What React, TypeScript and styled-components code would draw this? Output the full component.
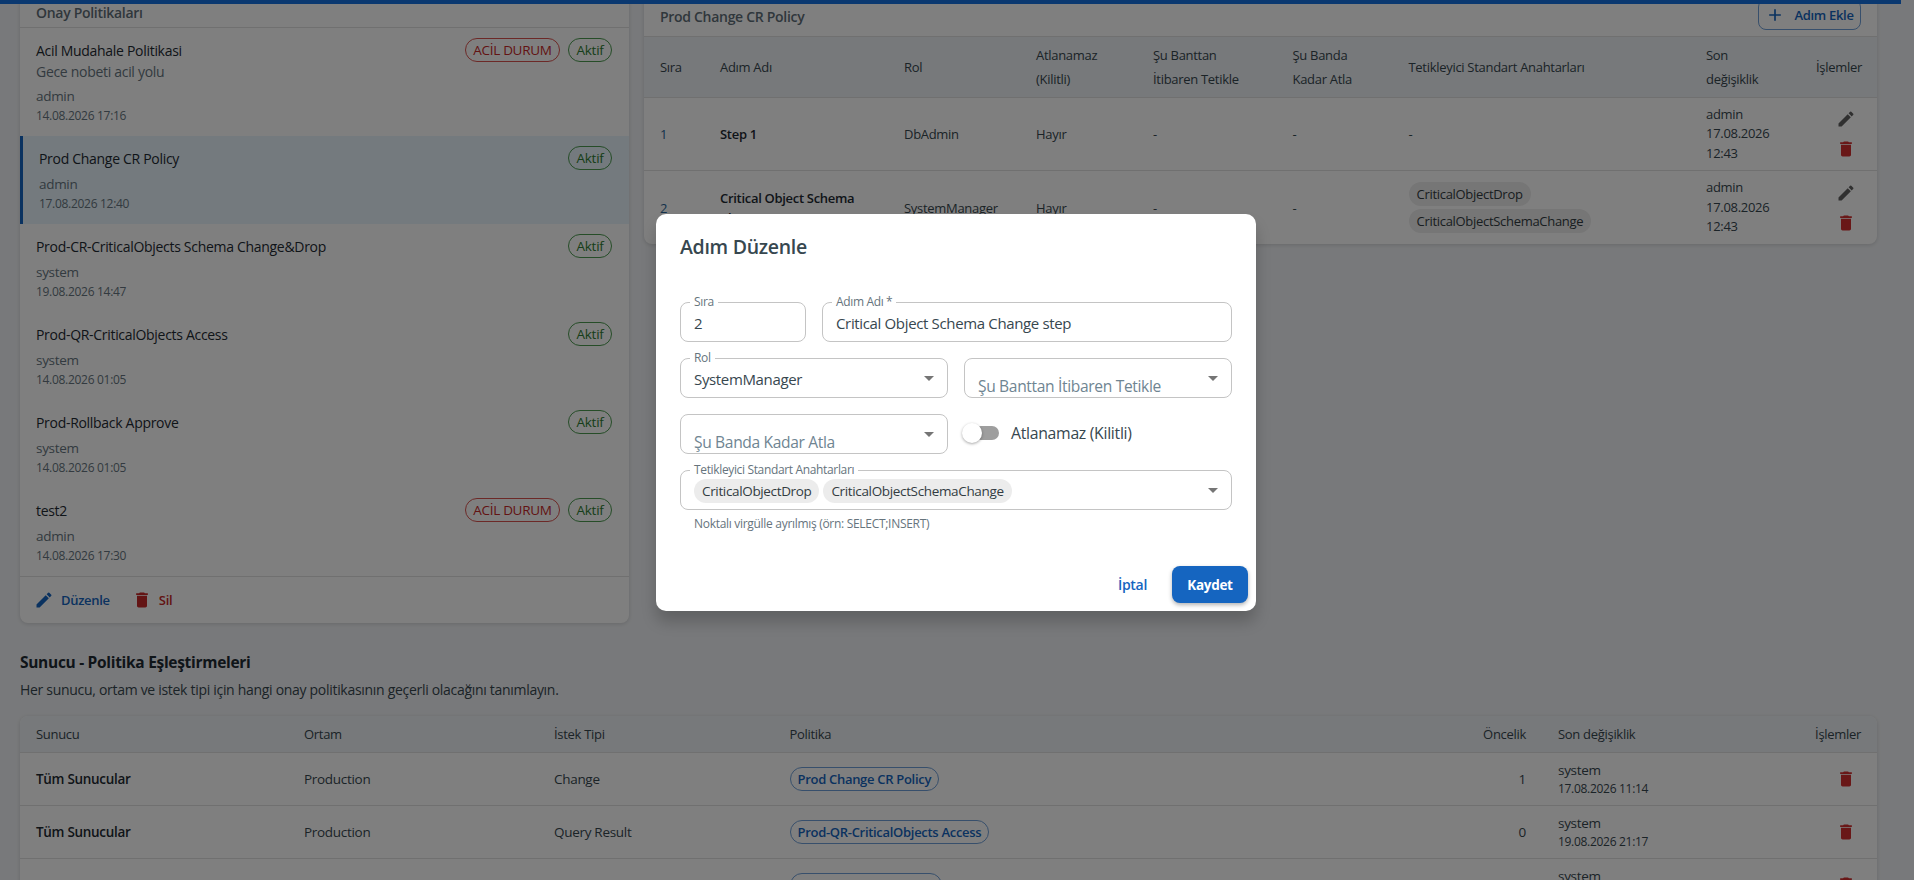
import React from "react";
import styled, { createGlobalStyle } from "styled-components";
import { MdAdd, MdArrowDropDown, MdDelete, MdEdit } from "react-icons/md";

const Global = createGlobalStyle`
  html, body { margin: 0; padding: 0; height: 100%; overflow: hidden; }
  body { font-family: "Open Sans", "Noto Sans", "Liberation Sans", sans-serif; color: #1e2a32; background: #f1f3f6; }
  * { box-sizing: border-box; }
`;

const Page = styled.div`
  position: relative;
  width: 1914px;
  height: 880px;
  overflow: hidden;
  background: #f1f3f6;
  letter-spacing: -0.3px;
`;
const TopBar = styled.div`
  position: relative;
  z-index: 2;
  height: 4px;
  width: 1901px;
  background: #1470e0;
`;
const Content = styled.div`
  margin-top: -4px;
  padding: 0 37px 0 20px;
`;
const Columns = styled.div`
  display: grid;
  grid-template-columns: 609px 1233px;
  column-gap: 15px;
  align-items: start;
`;
const Card = styled.section`
  background: #fff;
  border-radius: 0 0 8px 8px;
  box-shadow: 0 1px 4px rgba(0, 0, 0, 0.14);
  overflow: hidden;
`;
const ListHeader = styled.header`
  height: 28px;
  padding: 0 16px 3px;
  display: flex;
  align-items: center;
  font-size: 14px;
  font-weight: 600;
  color: #5f6e78;
  border-bottom: 1px solid #e0e0e0;
`;
const PolicyRow = styled.div<{ $selected?: boolean }>`
  padding: 10px 17px 11px 16px;
  background: ${(p) => (p.$selected ? "#e8f4fc" : "#fff")};
  border-left: ${(p) => (p.$selected ? "3px solid #1565c0" : "none")};
`;
const PolicyTop = styled.div`
  display: flex;
  align-items: center;
  justify-content: space-between;
  height: 24px;
`;
const PolicyName = styled.div`
  font-size: 14px;
  font-weight: 500;
  letter-spacing: -0.3px;
  color: #1e2a32;
`;
const Badges = styled.div`
  display: flex;
  gap: 8px;
`;
const Badge = styled.span<{ $tone: "red" | "green" }>`
  height: 24px;
  padding: 0 7.5px;
  display: inline-flex;
  align-items: center;
  border-radius: 12px;
  font-size: 13.5px;
  font-weight: 500;
  color: ${(p) => (p.$tone === "red" ? "#c62828" : "#2e7d32")};
  border: 1px solid ${(p) => (p.$tone === "red" ? "#d9534f" : "#4c9a50")};
`;
const PolicyNote = styled.div`
  font-size: 14px;
  line-height: 20px;
  color: #667580;
`;
const Owner = styled.div`
  margin-top: 4px;
  font-size: 13.5px;
  line-height: 20px;
  color: #667580;
`;
const Stamp = styled.div`
  margin-top: 1px;
  font-size: 12px;
  line-height: 18px;
  color: #667580;
`;
const ListFooter = styled.footer`
  height: 47px;
  padding: 0 14px;
  display: flex;
  align-items: center;
  gap: 22px;
  border-top: 1px solid #e0e0e0;
`;
const TextAction = styled.button<{ $danger?: boolean }>`
  display: inline-flex;
  align-items: center;
  gap: 7px;
  padding: 0;
  border: 0;
  background: none;
  font: inherit;
  letter-spacing: inherit;
  font-size: 13px;
  font-weight: 600;
  color: ${(p) => (p.$danger ? "#c62828" : "#1565c0")};
`;

const StepsHeader = styled.header`
  height: 37px;
  padding: 0 16px 3px 16px;
  display: flex;
  align-items: center;
  justify-content: space-between;
  border-bottom: 1px solid #e0e0e0;
`;
const StepsTitle = styled.div`
  font-size: 14px;
  font-weight: 600;
  color: #5f6e78;
`;
const AddButton = styled.button`
  height: 31px;
  width: 103px;
  margin-top: -4px;
  display: inline-flex;
  align-items: center;
  justify-content: center;
  gap: 9px;
  border: 1px solid #6f9fd8;
  border-radius: 8px;
  background: #fff;
  font: inherit;
  letter-spacing: inherit;
  font-size: 13px;
  font-weight: 600;
  color: #1565c0;
`;
const stepCols = "60px 184px 132px 117px 139.5px 116px 297.5px 110px 77px";
const StepHead = styled.div`
  display: grid;
  grid-template-columns: ${stepCols};
  height: 61px;
  align-items: center;
  background: #eef2f6;
  border-bottom: 1px solid #e0e0e0;
  font-size: 13px;
  font-weight: 500;
  line-height: 24px;
  color: #37474f;
`;
const StepRow = styled.div`
  display: grid;
  grid-template-columns: ${stepCols};
  height: 73px;
  align-items: center;
  border-bottom: 1px solid #e0e0e0;
  font-size: 13px;
  color: #37474f;
  &:last-child { border-bottom: 0; }
`;
const Cell = styled.div<{ $right?: boolean }>`
  padding: 0 16px;
  text-align: ${(p) => (p.$right ? "right" : "left")};
  min-width: 0;
`;
const WideHeadCell = styled(Cell)`
  padding-right: 13px;
`;
const NarrowHeadCell = styled(Cell)`
  padding-right: 30px;
`;
const OrderCell = styled(Cell)`
  color: #2a6496;
`;
const StepName = styled(Cell)`
  font-weight: 600;
  line-height: 20px;
  color: #1e2a32;
`;
const ChipStack = styled(Cell)`
  display: flex;
  flex-direction: column;
  align-items: flex-start;
  gap: 3px;
`;
const GreyChip = styled.span`
  height: 24px;
  padding: 0 8px;
  display: inline-flex;
  align-items: center;
  border-radius: 12px;
  background: #ececec;
  font-size: 13px;
  color: #333c42;
`;
const FieldChip = styled(GreyChip)`
  font-size: 13.5px;
  font-weight: 500;
`;
const StampCell = styled(Cell)`
  line-height: 19.5px;
`;
const ActionStack = styled.div`
  padding-right: 16px;
  display: flex;
  flex-direction: column;
  align-items: flex-end;
`;
const IconSlot = styled.span<{ $danger?: boolean }>`
  width: 30px;
  height: 30px;
  display: flex;
  align-items: center;
  justify-content: center;
  font-size: 20px;
  color: ${(p) => (p.$danger ? "#d32f2f" : "#616161")};
`;

const SectionTitle = styled.h2`
  margin: 27px 0 0;
  font-size: 15.5px;
  line-height: 24px;
  font-weight: 700;
  color: #1e2a32;
`;
const SectionNote = styled.p`
  margin: 6px 0 16px;
  font-size: 14px;
  line-height: 20px;
  color: #37474f;
`;
const mapCols = "268px 250px 235.5px 663.5px 105px 248px 87px";
const MapCard = styled.section`
  background: #fff;
  box-shadow: 0 1px 4px rgba(0, 0, 0, 0.14);
  border-radius: 8px 8px 0 0;
  overflow: hidden;
`;
const MapHead = styled.div`
  display: grid;
  grid-template-columns: ${mapCols};
  height: 37px;
  align-items: center;
  background: #eef2f6;
  border-bottom: 1px solid #e0e0e0;
  font-size: 13px;
  font-weight: 500;
  color: #37474f;
`;
const MapRow = styled.div`
  display: grid;
  grid-template-columns: ${mapCols};
  height: 53px;
  align-items: center;
  border-bottom: 1px solid #e0e0e0;
  font-size: 13.5px;
  color: #37474f;
`;
const ServerName = styled(Cell)`
  font-weight: 600;
  color: #1e2a32;
`;
const PolicyChip = styled.span`
  height: 24px;
  padding: 0 7px;
  display: inline-flex;
  align-items: center;
  border: 1px solid #6f9fd8;
  border-radius: 12px;
  font-size: 13px;
  font-weight: 600;
  color: #1565c0;
`;
const MapStampName = styled.div`
  line-height: 19px;
`;
const MapStampTime = styled.div`
  font-size: 12px;
  line-height: 18px;
`;
const MapAction = styled.div`
  padding-right: 16px;
  display: flex;
  justify-content: flex-end;
`;

const Backdrop = styled.div`
  position: absolute;
  inset: 0;
  z-index: 5;
  background: rgba(0, 0, 0, 0.5);
  display: flex;
  justify-content: center;
  align-items: flex-start;
  padding: 214px 2px 0 0;
`;
const Dialog = styled.div`
  width: 600px;
  height: 397px;
  background: #fff;
  border-radius: 10px;
  box-shadow: 0 11px 15px rgba(0, 0, 0, 0.2);
  display: flex;
  flex-direction: column;
`;
const DialogTitle = styled.h2`
  margin: 0;
  padding: 19px 24px 0;
  height: 88px;
  font-size: 19.5px;
  line-height: 28px;
  font-weight: 600;
  color: #37474f;
`;
const Form = styled.div`
  padding: 0 24px;
  display: flex;
  flex-direction: column;
  gap: 16px;
`;
const FieldRow = styled.div<{ $cols: string }>`
  display: grid;
  grid-template-columns: ${(p) => p.$cols};
  column-gap: 16px;
  align-items: center;
`;
const Field = styled.div`
  position: relative;
  height: 40px;
  padding: 2px 13px 0;
  display: flex;
  align-items: center;
  border: 1px solid #c4c4c4;
  border-radius: 8px;
  font-size: 15px;
  letter-spacing: -0.35px;
  color: #37474f;
`;
const FloatLabel = styled.span`
  position: absolute;
  top: -7px;
  left: 9px;
  padding: 0 4px;
  background: #fff;
  font-size: 12px;
  line-height: 12px;
  color: #66747d;
`;
const Placeholder = styled.span`
  padding-top: 14px;
  font-size: 15.6px;
  color: #6f8592;
`;
const Caret = styled.span`
  position: absolute;
  right: 6px;
  top: 50%;
  transform: translateY(-50%);
  display: flex;
  font-size: 24px;
  color: #757575;
`;
const Toggle = styled.div`
  display: flex;
  align-items: center;
  height: 40px;
  padding: 0 0 2px 10px;
  gap: 12px;
  font-size: 15.8px;
  color: #37474f;
`;
const Track = styled.span`
  position: relative;
  width: 25px;
  height: 14px;
  border-radius: 7px;
  background: #9e9e9e;
`;
const Knob = styled.span`
  position: absolute;
  left: -12px;
  top: -3px;
  width: 20px;
  height: 20px;
  border-radius: 50%;
  background: #fff;
  box-shadow: 0 1px 3px rgba(0, 0, 0, 0.35);
`;
const ChipLine = styled.div`
  display: flex;
  gap: 4px;
`;
const Helper = styled.div`
  margin: -10px 0 0 14px;
  font-size: 12px;
  line-height: 16px;
  color: #66747d;
`;
const DialogFooter = styled.footer`
  margin-top: auto;
  padding: 0 8px 8px 0;
  display: flex;
  justify-content: flex-end;
  align-items: center;
  gap: 13px;
`;
const Cancel = styled.button`
  border: 0;
  background: none;
  padding: 0 12px;
  font: inherit;
  letter-spacing: inherit;
  font-size: 14px;
  font-weight: 600;
  color: #1565c0;
`;
const Save = styled.button`
  width: 76px;
  height: 37px;
  border: 0;
  border-radius: 8px;
  background: #1565c0;
  box-shadow: 0 2px 4px rgba(0, 0, 0, 0.3);
  font: inherit;
  letter-spacing: inherit;
  font-size: 13.5px;
  font-weight: 700;
  color: #fff;
`;

const policies = [
  { name: "Acil Mudahale Politikasi", note: "Gece nobeti acil yolu", owner: "admin", time: "14.08.2026 17:16", urgent: true },
  { name: "Prod Change CR Policy", owner: "admin", time: "17.08.2026 12:40", selected: true },
  { name: "Prod-CR-CriticalObjects Schema Change&Drop", owner: "system", time: "19.08.2026 14:47" },
  { name: "Prod-QR-CriticalObjects Access", owner: "system", time: "14.08.2026 01:05" },
  { name: "Prod-Rollback Approve", owner: "system", time: "14.08.2026 01:05" },
  { name: "test2", owner: "admin", time: "14.08.2026 17:30", urgent: true },
];
const mappings = [
  { server: "Tüm Sunucular", env: "Production", type: "Change", policy: "Prod Change CR Policy", order: "1", time: "17.08.2026 11:14" },
  { server: "Tüm Sunucular", env: "Production", type: "Query Result", policy: "Prod-QR-CriticalObjects Access", order: "0", time: "19.08.2026 21:17" },
  { server: "", env: "", type: "", policy: "Prod-Rollback Approve", order: "", time: "14.08.2026 01:05" },
];

const RowActions = () => (
  <ActionStack>
    <IconSlot><MdEdit /></IconSlot>
    <IconSlot $danger><MdDelete /></IconSlot>
  </ActionStack>
);
const StepStamp = () => (
  <StampCell>admin<br />17.08.2026<br />12:43</StampCell>
);

export default function App() {
  return (
    <Page>
      <Global />
      <TopBar />
      <Content>
        <Columns>
          <Card>
            <ListHeader>Onay Politikaları</ListHeader>
            {policies.map((p) => (
              <PolicyRow key={p.name} $selected={p.selected}>
                <PolicyTop>
                  <PolicyName>{p.name}</PolicyName>
                  <Badges>
                    {p.urgent && <Badge $tone="red">ACİL DURUM</Badge>}
                    <Badge $tone="green">Aktif</Badge>
                  </Badges>
                </PolicyTop>
                {p.note && <PolicyNote>{p.note}</PolicyNote>}
                <Owner>{p.owner}</Owner>
                <Stamp>{p.time}</Stamp>
              </PolicyRow>
            ))}
            <ListFooter>
              <TextAction><MdEdit size={20} />Düzenle</TextAction>
              <TextAction $danger><MdDelete size={20} />Sil</TextAction>
            </ListFooter>
          </Card>
          <Card>
            <StepsHeader>
              <StepsTitle>Prod Change CR Policy</StepsTitle>
              <AddButton><MdAdd size={20} />Adım Ekle</AddButton>
            </StepsHeader>
            <StepHead>
              <Cell>Sıra</Cell>
              <Cell>Adım Adı</Cell>
              <Cell>Rol</Cell>
              <Cell>Atlanamaz (Kilitli)</Cell>
              <WideHeadCell>Şu Banttan İtibaren Tetikle</WideHeadCell>
              <Cell>Şu Banda Kadar Atla</Cell>
              <Cell>Tetikleyici Standart Anahtarları</Cell>
              <NarrowHeadCell>Son değişiklik</NarrowHeadCell>
              <Cell $right>İşlemler</Cell>
            </StepHead>
            <StepRow>
              <OrderCell>1</OrderCell>
              <StepName>Step 1</StepName>
              <Cell>DbAdmin</Cell>
              <Cell>Hayır</Cell>
              <Cell>-</Cell>
              <Cell>-</Cell>
              <Cell>-</Cell>
              <StepStamp />
              <RowActions />
            </StepRow>
            <StepRow>
              <OrderCell>2</OrderCell>
              <StepName>Critical Object Schema Change step</StepName>
              <Cell>SystemManager</Cell>
              <Cell>Hayır</Cell>
              <Cell>-</Cell>
              <Cell>-</Cell>
              <ChipStack>
                <GreyChip>CriticalObjectDrop</GreyChip>
                <GreyChip>CriticalObjectSchemaChange</GreyChip>
              </ChipStack>
              <StepStamp />
              <RowActions />
            </StepRow>
          </Card>
        </Columns>
        <SectionTitle>Sunucu - Politika Eşleştirmeleri</SectionTitle>
        <SectionNote>Her sunucu, ortam ve istek tipi için hangi onay politikasının geçerli olacağını tanımlayın.</SectionNote>
        <MapCard>
          <MapHead>
            <Cell>Sunucu</Cell>
            <Cell>Ortam</Cell>
            <Cell>İstek Tipi</Cell>
            <Cell>Politika</Cell>
            <Cell $right>Öncelik</Cell>
            <Cell>Son değişiklik</Cell>
            <Cell $right>İşlemler</Cell>
          </MapHead>
          {mappings.map((m) => (
            <MapRow key={m.policy}>
              <ServerName>{m.server}</ServerName>
              <Cell>{m.env}</Cell>
              <Cell>{m.type}</Cell>
              <Cell><PolicyChip>{m.policy}</PolicyChip></Cell>
              <Cell $right>{m.order}</Cell>
              <Cell>
                <MapStampName>system</MapStampName>
                <MapStampTime>{m.time}</MapStampTime>
              </Cell>
              <MapAction><IconSlot $danger><MdDelete /></IconSlot></MapAction>
            </MapRow>
          ))}
        </MapCard>
      </Content>

      <Backdrop>
        <Dialog>
          <DialogTitle>Adım Düzenle</DialogTitle>
          <Form>
            <FieldRow $cols="126px 1fr">
              <Field><FloatLabel>Sıra</FloatLabel>2</Field>
              <Field><FloatLabel>Adım Adı *</FloatLabel>Critical Object Schema Change step</Field>
            </FieldRow>
            <FieldRow $cols="1fr 1fr">
              <Field><FloatLabel>Rol</FloatLabel>SystemManager<Caret><MdArrowDropDown /></Caret></Field>
              <Field><Placeholder>Şu Banttan İtibaren Tetikle</Placeholder><Caret><MdArrowDropDown /></Caret></Field>
            </FieldRow>
            <FieldRow $cols="1fr 1fr">
              <Field><Placeholder>Şu Banda Kadar Atla</Placeholder><Caret><MdArrowDropDown /></Caret></Field>
              <Toggle><Track><Knob /></Track>Atlanamaz (Kilitli)</Toggle>
            </FieldRow>
            <Field>
              <FloatLabel>Tetikleyici Standart Anahtarları</FloatLabel>
              <ChipLine>
                <FieldChip>CriticalObjectDrop</FieldChip>
                <FieldChip>CriticalObjectSchemaChange</FieldChip>
              </ChipLine>
              <Caret><MdArrowDropDown /></Caret>
            </Field>
            <Helper>Noktalı virgülle ayrılmış (örn: SELECT;INSERT)</Helper>
          </Form>
          <DialogFooter>
            <Cancel>İptal</Cancel>
            <Save>Kaydet</Save>
          </DialogFooter>
        </Dialog>
      </Backdrop>
    </Page>
  );
}
